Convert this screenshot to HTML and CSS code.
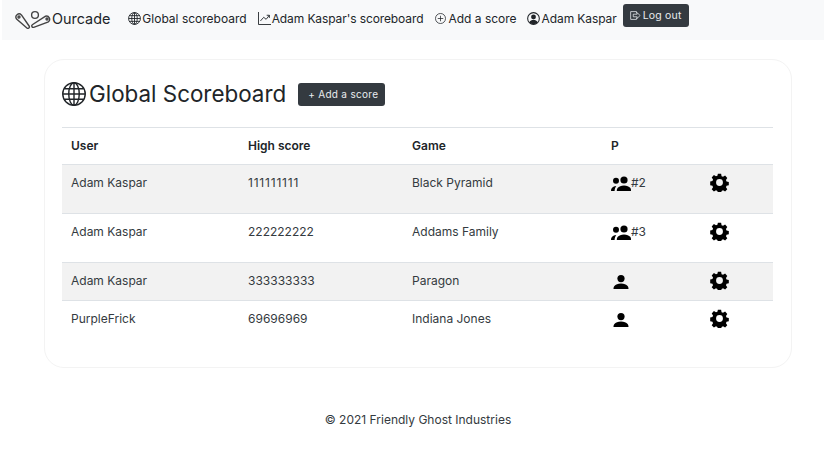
FILE: index.html
```html
<!DOCTYPE html>
<html lang="en">
<head>
<meta charset="utf-8">
<title>Ourcade</title>
<link rel="stylesheet" href="styles.css">
</head>
<body>
<nav class="navbar">
  <a class="brand">
    <svg class="logo" width="37" height="20" viewBox="0 0 37 20" fill="none" stroke="#444" stroke-width="1.400">
      <path d="M6.400 5.900L14.100 17A1.500 1.500 0 0 1 11.900 19L1.600 10.100A3.200 3.200 0 0 1 6.400 5.900z"/>
      <circle cx="4" cy="8" r="1"/>
      <path d="M30.600 7.200L17.300 15.700A1.500 1.500 0 0 0 18.700 18.300L33.400 12.800A3.200 3.200 0 0 0 30.600 7.200z"/>
      <circle cx="32" cy="10" r="1"/>
      <circle cx="20" cy="6" r="3.400"/>
    </svg>
    <span>Ourcade</span>
  </a>
  <a class="nav-link">
    <svg width="13" height="13" viewBox="0 0 16 16" fill="none" stroke="#212529" stroke-width="1.100"><circle cx="8" cy="8" r="7.300"/><ellipse cx="8" cy="8" rx="3.400" ry="7.300"/><path d="M8 .7v14.600M.7 8h14.600M1.700 4.500h12.600M1.700 11.500h12.600"/></svg>
    <span>Global scoreboard</span>
  </a>
  <a class="nav-link nav-link-chart">
    <svg width="13" height="13" viewBox="0 0 16 16" fill="none" stroke="#212529" stroke-width="1.100"><path d="M.6 0v15.400H16M3 11l4-4.500 3 2.500 4-5M10.700 4H14v3.300"/></svg>
    <span class="tight">Adam Kaspar's scoreboard</span>
  </a>
  <a class="nav-link nav-link-add">
    <svg width="11" height="11" viewBox="0 0 16 16" fill="none" stroke="#212529" stroke-width="1.100"><circle cx="8" cy="8" r="7.300"/><path d="M8 4v8M4 8h8"/></svg>
    <span>Add a score</span>
  </a>
  <a class="nav-link nav-link-user">
    <svg width="13" height="13" viewBox="0 0 16 16"><circle cx="8" cy="8" r="7.200" fill="none" stroke="#212529" stroke-width="1.300"/><circle cx="8" cy="6" r="3" fill="#212529"/><path d="M2.800 13c1-2.700 3-3.600 5.200-3.600s4.200.9 5.200 3.600A7 7 0 0 1 8 15.200 7 7 0 0 1 2.800 13z" fill="#212529"/></svg>
    <span class="tight">Adam Kaspar</span>
  </a>
  <a class="btn btn-logout">
    <svg width="12" height="11" viewBox="0 0 17 16" fill="none" stroke="#e9ecef" stroke-width="1.200"><path d="M10 11.500V14H1V2h9v2.500M5 6h6V3.500L15.500 8 11 12.500V10H5z"/></svg>
    <span>Log out</span>
  </a>
</nav>
<main class="card">
  <header class="card-head">
    <svg class="globe" width="24" height="24" viewBox="0 0 16 16" fill="none" stroke="#212529" stroke-width=".95"><circle cx="8" cy="8" r="7.500"/><ellipse cx="8" cy="8" rx="3.500" ry="7.500"/><path d="M8 .5v15M.5 8h15M1.600 4.500h12.800M1.600 11.500h12.800"/></svg>
    <h1>Global Scoreboard</h1>
    <a class="btn btn-add">+ Add a score</a>
  </header>
  <table class="scores">
    <thead>
      <tr><th class="c-user">User</th><th class="c-score">High score</th><th class="c-game">Game</th><th class="c-p">P</th><th></th></tr>
    </thead>
    <tbody>
      <tr class="tall odd">
        <td>Adam Kaspar</td><td class="ones">111111111</td><td>Black Pyramid</td>
        <td><span class="p-cell"><svg class="people" width="20" height="16" viewBox="0 0 20 16"><use href="#i-people"/></svg>#2</span></td>
        <td><svg class="gear" width="19" height="19" viewBox="0 0 20 20"><use href="#i-gear"/></svg></td>
      </tr>
      <tr class="tall">
        <td>Adam Kaspar</td><td>222222222</td><td>Addams Family</td>
        <td><span class="p-cell"><svg class="people" width="20" height="16" viewBox="0 0 20 16"><use href="#i-people"/></svg>#3</span></td>
        <td><svg class="gear" width="19" height="19" viewBox="0 0 20 20"><use href="#i-gear"/></svg></td>
      </tr>
      <tr class="odd">
        <td>Adam Kaspar</td><td>333333333</td><td>Paragon</td>
        <td><svg class="person" width="20" height="16" viewBox="0 0 20 16"><use href="#i-person"/></svg></td>
        <td><svg class="gear" width="19" height="19" viewBox="0 0 20 20"><use href="#i-gear"/></svg></td>
      </tr>
      <tr>
        <td>PurpleFrick</td><td>69696969</td><td>Indiana Jones</td>
        <td><svg class="person" width="20" height="16" viewBox="0 0 20 16"><use href="#i-person"/></svg></td>
        <td><svg class="gear" width="19" height="19" viewBox="0 0 20 20"><use href="#i-gear"/></svg></td>
      </tr>
    </tbody>
  </table>
</main>
<footer class="footer">© 2021 Friendly Ghost Industries</footer>
<svg class="defs" width="0" height="0" aria-hidden="true">
  <defs>
    <symbol id="i-person" viewBox="0 0 20 16">
      <circle cx="10" cy="4.600" r="3.600"/><path d="M2.500 15c0-1 .1-2 .9-3 1.200-1.500 3.600-2.500 6.600-2.500s5.400 1 6.600 2.500c.8 1 .9 2 .9 3z"/>
    </symbol>
    <symbol id="i-people" viewBox="0 0 20 16">
      <circle cx="13" cy="4" r="3.600"/><path d="M5.800 15c0-1.200.2-2.200 1-3.200 1.200-1.500 3.300-2.400 6.200-2.400s5 .9 6.200 2.400c.8 1 .8 2 .8 3.200z"/>
      <circle cx="5" cy="4.800" r="3"/><path d="M0 15c0-1.100.1-2 .7-2.800.8-1.200 2.300-2.200 4.600-2.300-.9 1.200-1.700 2.900-1.700 5.100z"/>
    </symbol>
    <symbol id="i-gear" viewBox="0 0 20 20">
      <path fill-rule="evenodd" d="M8.300.8h3.400l.5 2.500 1.500.7 2.200-1.300 2.300 2.500-1.400 2.100.6 1.600 2.400.5v3.400l-2.400.5-.6 1.600 1.400 2.100-2.300 2.500-2.200-1.300-1.500.7-.5 2.400H8.300l-.5-2.400-1.500-.7-2.200 1.300-2.300-2.500 1.400-2.100-.6-1.600-2.400-.5V8.900l2.400-.5.600-1.600L1.800 4.700l2.300-2.500 2.200 1.300 1.500-.7zM10 6.400a3.600 3.600 0 1 0 0 7.200 3.600 3.600 0 0 0 0-7.200z"/>
    </symbol>
  </defs>
</svg>
</body>
</html>
```
FILE: styles.css
```css
* { box-sizing: border-box; }
html, body { margin: 0; padding: 0; }
body {
  background: #fff;
  color: #212529;
  font-family: Inter, "Liberation Sans", sans-serif;
  font-size: 12px;
  line-height: 1.5;
}
.navbar {
  display: flex;
  align-items: flex-start;
  height: 40px;
  margin-left: 2px;
  padding: 4px 0 0 13px;
  background: #f8f9fa;
}
.brand {
  display: flex;
  align-items: center;
  height: 30px;
  font-size: 14.400px;
  margin-right: 18px;
}
.logo { flex: none; }
.nav-link {
  display: flex;
  align-items: center;
  gap: 1px;
  height: 29px;
  margin-right: 11px;
  white-space: nowrap;
}
.tight { letter-spacing: -.1px; }
.nav-link-chart { margin-right: 12px; }
.nav-link-add { gap: 2px; margin-right: 10px; }
.nav-link-user { margin-right: 6px; gap: 2px; }
.btn {
  display: inline-flex;
  align-items: center;
  background: #343a40;
  color: #e9ecef;
  border-radius: 3px;
  font-size: 10.500px;
  letter-spacing: .2px;
  white-space: nowrap;
}
.btn-logout {
  gap: 2px;
  width: 66px;
  height: 23px;
  padding: 0 7px;
}
.card {
  width: 748px;
  height: 309px;
  margin: 19px 0 0 44px;
  padding: 19px 18px 0 17px;
  border: 1px solid #f3f3f3;
  border-radius: 20px;
}
.card-head {
  display: flex;
  align-items: center;
  height: 30px;
  margin-bottom: 18px;
}
.card-head h1 {
  margin: 0 12px 0 3px;
  font-size: 22.400px;
  font-weight: 400;
  line-height: 30px;
}
.globe { flex: none; }
.btn-add {
  height: 23px;
  padding: 0 7px 0 10px;
  font-size: 10px;
  letter-spacing: .3px;
}
.scores {
  width: 711px;
  border-collapse: collapse;
  table-layout: fixed;
}
.scores th {
  height: 37px;
  padding: 0 9px;
  font-weight: 600;
  text-align: left;
  vertical-align: middle;
  border-top: 1px solid #dee2e6;
}
.c-user { width: 177px; }
.c-score { width: 164px; }
.c-game { width: 199px; }
.c-p { width: 99px; }
.scores td {
  height: 38px;
  padding: 9px 9px 0;
  vertical-align: top;
  border-top: 1px solid #dee2e6;
  color: #343a40;
}
.scores tr.tall td { height: 49px; }
.scores tr.odd td { background: #f2f2f2; }
.scores td svg { display: block; fill: #000; }
.scores td.ones { letter-spacing: .8px; }
.p-cell { display: flex; align-items: center; }
.people { margin-top: 1px; }
.person { margin-top: 2px; }
.scores td svg.gear { margin-top: -1px; }
.footer {
  margin-top: 43px;
  padding-left: 12px;
  text-align: center;
  color: #343a40;
}
.defs { position: absolute; }
```
